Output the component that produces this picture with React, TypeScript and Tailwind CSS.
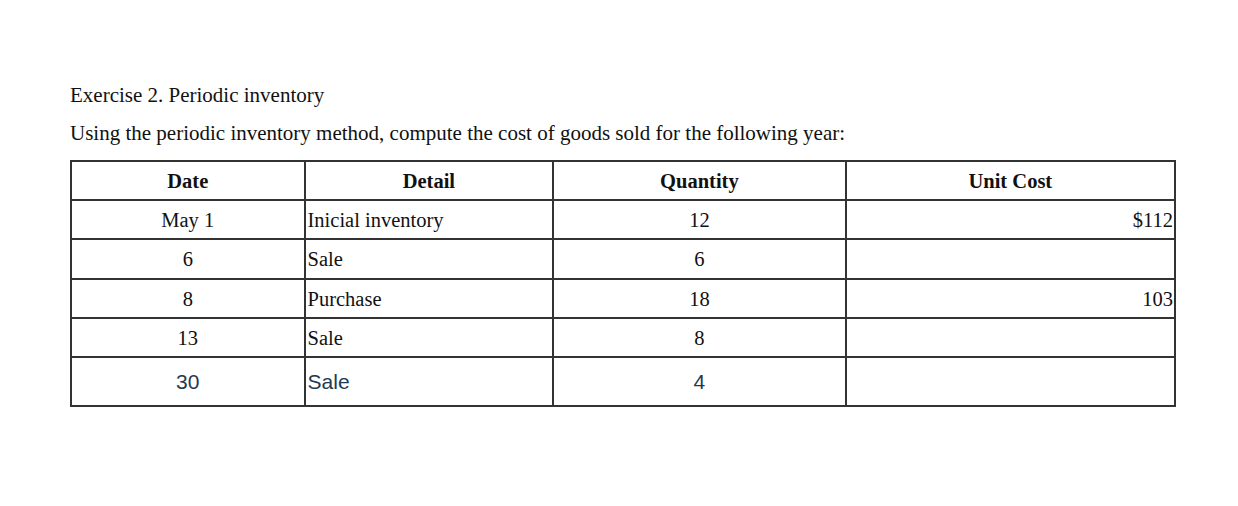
import React from "react";

const rows = [
  { date: "May 1", detail: "Inicial inventory", qty: "12", cost: "$112", h: "h-[39px]" },
  { date: "6", detail: "Sale", qty: "6", cost: "", h: "h-[40px]" },
  { date: "8", detail: "Purchase", qty: "18", cost: "103", h: "h-[39px]" },
  { date: "13", detail: "Sale", qty: "8", cost: "", h: "h-[39px]" },
];

export default function App() {
  return (
    <div className="w-[1238px] h-[506px] bg-white text-[#111] font-['Liberation_Serif',serif]">
      <div className="pl-[70px] pt-[82px]">
        <p className="text-[21px] leading-[26px]">Exercise 2. Periodic inventory</p>
        <p className="text-[21px] leading-[26px] mt-[12px]">
          Using the periodic inventory method, compute the cost of goods sold for the following year:
        </p>
        <table className="mt-[14px] border-collapse w-[1106px] text-[20.5px] leading-[24px]">
          <colgroup>
            <col className="w-[234px]" />
            <col className="w-[249px]" />
            <col className="w-[293px]" />
            <col className="w-[330px]" />
          </colgroup>
          <thead>
            <tr className="h-[39px]">
              <th className="border-2 border-[#333] font-bold text-center p-0">Date</th>
              <th className="border-2 border-[#333] font-bold text-center p-0">Detail</th>
              <th className="border-2 border-[#333] font-bold text-center p-0">Quantity</th>
              <th className="border-2 border-[#333] font-bold text-center p-0">Unit Cost</th>
            </tr>
          </thead>
          <tbody>
            {rows.map((r, i) => (
              <tr key={i} className={r.h}>
                <td className="border-2 border-[#333] text-center p-0">{r.date}</td>
                <td className="border-2 border-[#333] text-left pl-[2px] p-0">{r.detail}</td>
                <td className="border-2 border-[#333] text-center p-0">{r.qty}</td>
                <td className="border-2 border-[#333] text-right pr-[1px] p-0">{r.cost}</td>
              </tr>
            ))}
            <tr className="h-[49px] text-[#1e3a52] font-['Liberation_Sans',sans-serif] text-[21px]">
              <td className="border-2 border-[#333] text-center p-0">30</td>
              <td className="border-2 border-[#333] text-left pl-[2px] p-0">Sale</td>
              <td className="border-2 border-[#333] text-center p-0">4</td>
              <td className="border-2 border-[#333] p-0"></td>
            </tr>
          </tbody>
        </table>
      </div>
    </div>
  );
}
